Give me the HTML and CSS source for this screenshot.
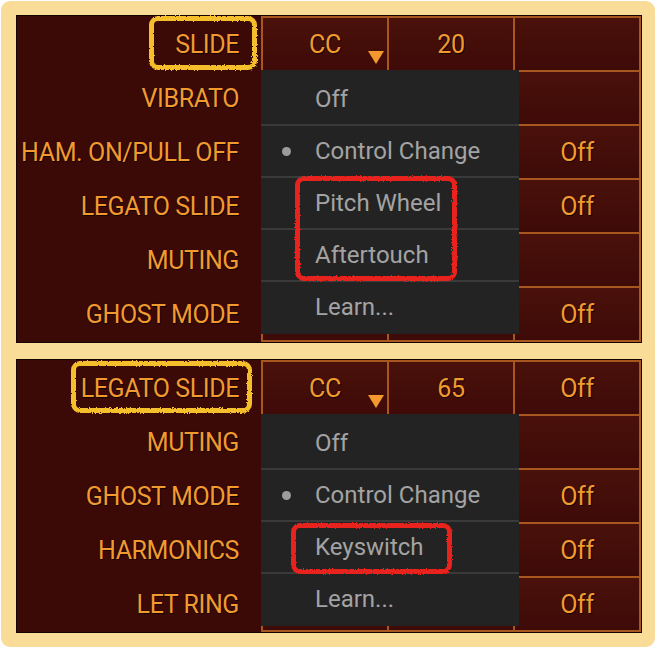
FILE: index.html
```html
<!DOCTYPE html>
<html lang="en">
<head>
    <meta charset="UTF-8">
    <meta name="viewport" content="width=device-width, initial-scale=1.0">
    <title>Articulation Mapping</title>
    <link rel="stylesheet" href="styles.css">
</head>
<body>
    <svg class="defs" width="0" height="0">
        <filter id="rough">
            <feTurbulence type="fractalNoise" baseFrequency="0.8" numOctaves="2" seed="3" result="noise"/>
            <feDisplacementMap in="SourceGraphic" in2="noise" scale="3"/>
        </filter>
    </svg>
    <div class="frame">
        <section class="panel">
            <div class="labels">
                <div class="label">SLIDE</div>
                <div class="label">VIBRATO</div>
                <div class="label">HAM. ON/PULL OFF</div>
                <div class="label">LEGATO SLIDE</div>
                <div class="label">MUTING</div>
                <div class="label">GHOST MODE</div>
            </div>
            <div class="cells">
                <div class="cell">CC<span class="arrow"></span></div>
                <div class="cell">20</div>
                <div class="cell"></div>
                <div class="cell"></div>
                <div class="cell"></div>
                <div class="cell"></div>
                <div class="cell"></div>
                <div class="cell"></div>
                <div class="cell">Off</div>
                <div class="cell"></div>
                <div class="cell"></div>
                <div class="cell">Off</div>
                <div class="cell"></div>
                <div class="cell"></div>
                <div class="cell"></div>
                <div class="cell"></div>
                <div class="cell"></div>
                <div class="cell">Off</div>
            </div>
            <ul class="menu">
                <li class="menu-item">Off</li>
                <li class="menu-item selected">Control Change</li>
                <li class="menu-item">Pitch Wheel</li>
                <li class="menu-item">Aftertouch</li>
                <li class="menu-item">Learn...</li>
            </ul>
            <div class="mark mark-yellow mark-slide"></div>
            <div class="mark mark-red mark-pitch"></div>
        </section>

        <section class="panel">
            <div class="labels">
                <div class="label">LEGATO SLIDE</div>
                <div class="label">MUTING</div>
                <div class="label">GHOST MODE</div>
                <div class="label">HARMONICS</div>
                <div class="label">LET RING</div>
            </div>
            <div class="cells">
                <div class="cell">CC<span class="arrow"></span></div>
                <div class="cell">65</div>
                <div class="cell">Off</div>
                <div class="cell"></div>
                <div class="cell"></div>
                <div class="cell"></div>
                <div class="cell"></div>
                <div class="cell"></div>
                <div class="cell">Off</div>
                <div class="cell"></div>
                <div class="cell"></div>
                <div class="cell">Off</div>
                <div class="cell"></div>
                <div class="cell"></div>
                <div class="cell">Off</div>
            </div>
            <ul class="menu">
                <li class="menu-item">Off</li>
                <li class="menu-item selected">Control Change</li>
                <li class="menu-item">Keyswitch</li>
                <li class="menu-item">Learn...</li>
            </ul>
            <div class="mark mark-yellow mark-legato"></div>
            <div class="mark mark-red mark-keyswitch"></div>
        </section>
    </div>
</body>
</html>
```

FILE: styles.css
```css
body {
    margin: 0;
    background: #ffffff;
    font-family: Roboto, "Liberation Sans", sans-serif;
}
.defs {
    position: absolute;
}
.frame {
    margin: 1px;
    width: 654px;
    height: 646px;
    box-sizing: border-box;
    padding: 14px 0 0 15px;
    background: #f9dc98;
    border-radius: 9px;
    display: flex;
    flex-direction: column;
    gap: 16px;
}
.panel {
    position: relative;
    display: flex;
    width: 624px;
    background: #3b0a07;
    border: 1px solid #170402;
}
.labels {
    width: 244px;
    display: grid;
    grid-auto-rows: 52px;
    row-gap: 2px;
    padding: 2px 0;
}
.label {
    display: flex;
    align-items: center;
    justify-content: flex-end;
    padding-right: 22px;
    font-size: 25px;
    letter-spacing: -0.4px;
    color: #f39a2f;
    text-shadow: 1px 1px 0 #160301, 0 0 1px #160301;
}
.cells {
    display: grid;
    grid-template-columns: repeat(3, 124px);
    grid-auto-rows: 52px;
    gap: 2px;
    padding: 2px;
    background: #a8581e;
}
.cell {
    position: relative;
    display: flex;
    align-items: center;
    justify-content: center;
    font-size: 25px;
    letter-spacing: -0.3px;
    color: #f39a2f;
    text-shadow: 1px 1px 0 #160301, 0 0 1px #160301;
    background: linear-gradient(#4a110b, #3e0a07);
}
.arrow {
    position: absolute;
    right: 3px;
    bottom: 6px;
    width: 0;
    height: 0;
    border-left: 8px solid transparent;
    border-right: 8px solid transparent;
    border-top: 13px solid #f4982e;
}
.menu {
    position: absolute;
    left: 244px;
    top: 54px;
    width: 258px;
    margin: 0;
    padding: 4px 0 2px;
    list-style: none;
    background: #232323;
}
.menu-item {
    height: 50px;
    display: flex;
    align-items: center;
    padding-left: 54px;
    font-size: 24px;
    color: #a3a3a3;
}
.menu-item + .menu-item {
    border-top: 2px solid #3a3a3a;
}
.menu-item.selected::before {
    content: "";
    width: 9px;
    height: 9px;
    margin-left: -33px;
    margin-right: 24px;
    border-radius: 50%;
    background: #9c9c9c;
}
.mark {
    position: absolute;
    box-sizing: border-box;
    border-radius: 9px;
    filter: url(#rough);
}
.mark-yellow {
    border: 5px solid #f4bf2a;
}
.mark-red {
    border: 5px solid #e8231c;
}
.mark-slide {
    left: 132px;
    top: 0;
    width: 108px;
    height: 54px;
}
.mark-pitch {
    left: 278px;
    top: 160px;
    width: 162px;
    height: 105px;
}
.mark-legato {
    left: 54px;
    top: 1px;
    width: 181px;
    height: 52px;
}
.mark-keyswitch {
    left: 274px;
    top: 163px;
    width: 161px;
    height: 51px;
}
```
